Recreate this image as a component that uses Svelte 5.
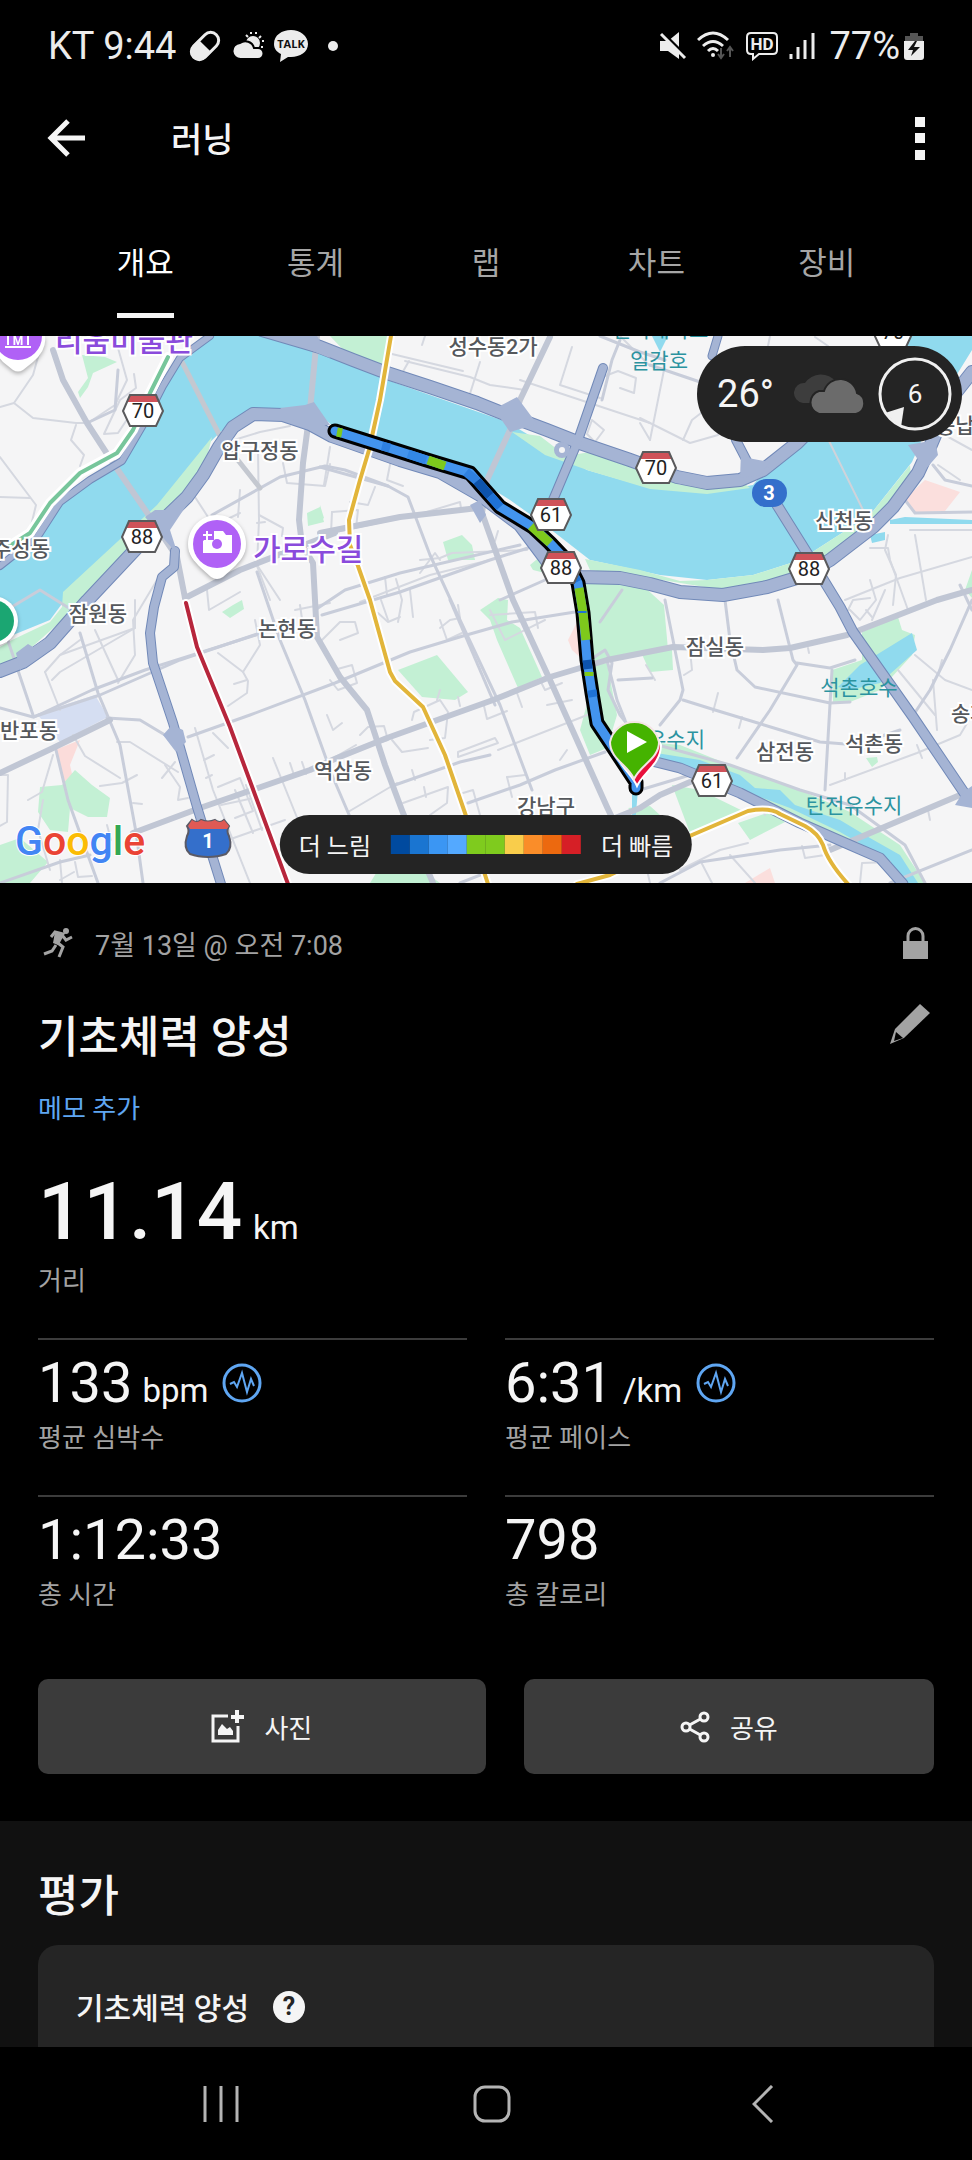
<script>
  let activeTab = "개요";
  const tabs = ["개요", "통계", "랩", "차트", "장비"];

  const stats = [
    { value: "133", unit: "bpm", label: "평균 심박수", chart: true },
    { value: "6:31", unit: "/km", label: "평균 페이스", chart: true },
    { value: "1:12:33", label: "총 시간" },
    { value: "798", label: "총 칼로리" },
  ];

  const paceColors = [
    "#004a9f", "#1a75d1", "#3b96f3", "#54a9ff", "#7fcb1e",
    "#7fcb1e", "#f9cd4b", "#fa8d29", "#ec690f", "#d61f26",
  ];

  // small streets
  const minor = [
    "M0 407 14 403 33 375 40 350", "M14 403 33 418 76 423 86 423", "M118 348 127 380 115 405 88 423", "M134 374 136 388 120 400 104 434 118 433 132 412",
    "M76 425 71 440 84 455 80 466", "M0 457 36 505 30 530", "M0 497 30 498", "M234 440 260 432 290 426", "M258 450 259 520 257 565 280 600",
    "M283 463 287 483 325 486 330 464", "M259 515 283 528 282 536", "M257 523 265 522", "M238 517 240 490", "M195 497 208 517 202 524",
    "M215 525 240 513", "M330 447 324 485", "M394 444 387 480 403 486", "M375 487 368 505 350 502", "M332 512 358 510 356 528", "M332 512 331 533 420 514 460 502 461 508",
    "M257 566 270 600", "M207 590 209 610 240 592", "M160 575 133 620 135 655 118 683", "M45 672 60 655 135 628 135 600", "M45 672 60 710", "M80 640 60 655", "M95 630 118 680",
    "M52 680 60 672 135 628", "M218 653 243 672 260 645 255 620", "M243 672 248 681 247 693 228 706", "M234 684 247 680", "M0 775 8 775 7 822 0 826", "M53 755 42 792 28 800",
    "M43 800 38 830 50 870", "M73 735 85 756 120 778", "M100 786 122 783 137 775", "M117 742 130 742 178 772", "M165 765 180 787 178 800 188 798", "M162 778 175 762",
    "M195 728 213 790 250 883", "M213 733 228 748", "M204 760 214 755", "M206 778 212 775", "M218 787 240 778 253 811 235 818", "M235 790 253 833", "M246 785 262 830",
    "M221 805 258 797", "M228 840 285 820", "M273 758 300 825", "M290 763 294 775", "M302 762 306 774", "M133 803 142 804", "M107 825 111 840", "M60 860 62 883", "M75 862 78 877 92 876",
    "M60 880 74 872", "M322 640 340 622 355 622 358 633 340 640", "M295 610 330 603", "M305 640 300 605", "M405 361 470 377 490 385 525 390", "M409 361 401 375", "M425 336 422 345", "M392 354 463 371", "M480 362 468 400",
    "M520 380 650 423", "M572 347 560 385 600 398", "M600 378 618 371 636 378 634 393 620 388", "M592 420 604 430 595 442 587 434 592 420", "M640 423 650 440", "M620 336 650 366",
    "M388 620 381 600", "M378 613 388 622 400 617", "M396 579 402 600 398 622", "M410 590 413 617", "M385 577 387 595", "M420 560 440 558 452 553 527 550", "M420 573 435 553 440 560", "M498 531 495 541",
    "M360 602 430 575 490 560", "M440 628 450 620 460 618 458 605", "M440 620 447 640 462 633", "M490 615 535 612 538 628", "M490 610 505 640 545 620", "M327 715 333 730 342 723", "M334 670 352 665 357 683 338 690 330 680",
    "M360 735 368 727 384 726 388 740 372 745", "M412 720 414 712 440 700 448 712 445 738 430 740", "M392 740 402 752 428 748", "M437 700 440 690", "M458 697 460 706", "M484 706 487 719 507 711",
    "M540 680 545 690 562 683", "M517 693 522 707", "M458 752 495 738 498 743 458 757 458 752", "M498 750 600 710", "M547 705 572 700", "M560 760 567 750", "M507 777 525 775", "M507 777 512 797", "M403 803 448 787 447 803 430 815",
    "M412 770 415 780", "M424 787 426 797", "M463 793 473 790 480 815", "M348 812 397 783", "M356 745 330 760", "M640 760 650 750",
    "M664 370 650 440", "M640 418 690 443 718 435", "M683 440 692 420 705 410", "M770 336 768 346", "M815 337 828 346", "M890 405 972 450", "M938 465 960 480",
    "M910 530 972 530", "M870 548 888 548 890 560 908 610", "M888 535 885 550 896 575 893 605", "M915 535 926 600", "M972 557 900 578 845 600", "M870 580 876 600 860 620 850 610", "M848 610 853 600 870 598",
    "M866 610 872 617", "M885 590 872 620", "M690 650 692 670 684 675", "M718 693 713 712", "M742 717 739 728", "M808 648 809 653", "M845 780 845 773", "M922 758 917 745", "M930 820 928 810",
    "M915 655 945 680 972 690", "M898 670 935 715", "M942 660 938 675", "M730 855 755 883", "M680 870 720 850 748 843", "M700 860 712 883", "M640 840 650 883", "M760 800 765 815", "M802 846 805 858 825 855",
    "M860 883 862 863 890 862", "M655 680 646 665", "M933 680 937 730", "M830 785 917 753 960 735 972 715",
  ];

  // mid-size streets
  const medium = [
    "M87 423 115 410 118 370", "M212 515 280 477 325 466 345 470 388 486 408 497 430 555 460 620 500 705 532 790", "M320 467 388 486", "M80 633 98 693 120 745 136 832 143 883",
    "M257 572 280 640 305 700 332 775 350 817", "M450 600 465 635 495 705", "M0 708 33 717 100 695 180 660 260 633", "M0 617 33 715", "M34 717 92 690 145 670 256 635", "M188 737 250 715 335 683 410 652 463 636 512 622 575 612",
    "M315 610 345 590 400 573 520 545", "M322 615 400 592 490 560 528 548", "M395 785 460 762 490 755", "M468 803 520 785 555 770 605 752", "M0 614 40 590 80 615", "M56 750 68 800 98 883", "M107 718 140 720 165 735",
    "M650 365 703 383", "M665 600 683 690 680 700 660 725", "M683 700 715 710 820 742 845 744", "M725 600 730 640 737 670 755 687 830 703 850 702", "M778 600 793 660 797 665 770 710 737 758",
    "M797 663 830 668 855 660", "M832 670 825 790", "M590 660 605 650 612 663 608 690 620 715 640 740", "M600 622 622 590", "M607 660 617 700 625 720", "M618 680 652 678", "M660 883 700 862 780 850 830 845", "M972 600 950 650 930 690 912 717", "M900 730 870 740 865 745",
    "M933 465 945 480 972 486", "M905 500 915 513 972 512", "M960 585 972 610", "M640 740 730 765 800 790 850 805 905 845 925 883", "M0 883 60 862 90 855", "M460 883 600 828", "M640 790 690 775", "M890 883 972 850",
    "M545 580 500 600", "M600 336 640 352 665 360", "M602 400 612 360 620 340",
  ];

  // wide grey streets
  const wide = [
    "M53 350 63 380 87 423 113 463 150 517 177 557 185 598", "M317 336 310 410 303 463 299 520 302 545 313 563 317 637 340 677 367 710 385 765 403 813 433 883",
    "M550 337 520 400 510 430 487 480 482 513 513 600 550 680 607 807 625 845", "M0 773 53 748 110 720", "M320 533 400 517 478 508", "M185 598 240 570 335 533", "M133 833 200 808 310 770 337 758 387 738 493 700 550 677 607 660 673 647 763 650 790 648 847 635 937 600 972 590",
    "M573 835 640 808 660 795 690 782", "M830 850 960 795",
  ];

  const highways = [
    { d: "M210 336 180 358 163 386 143 425 122 461 90 480 60 502 38 536 0 566", w: 6 },
    { d: "M262 330 320 347 353 360 387 373 430 387 477 403 507 415 547 430 580 443 630 460 677 477 707 483 740 480 763 470 797 443 850 390 900 336", w: 12 },
    { d: "M0 671 23 662 50 643 87 601 133 552 160 523 187 497 203 475 219 447 233 427 253 414 283 415 310 424 332 436 400 460 440 472 480 495 520 525 550 565 580 577 620 578 650 584 680 592 723 595 767 587 800 577 830 560 873 527 893 507 918 473 930 447 950 400 972 372", w: 12 },
    { d: "M603 368 577 443 553 500", w: 8 },
    { d: "M175 551 174 567 162 577 154 607 150 633 153 663 173 723 197 807 221 884", w: 8 },
    { d: "M777 505 807 553 840 607 853 632 913 717 967 797", w: 9 },
    { d: "M640 758 680 768 740 793 800 823 850 845 880 858 903 884", w: 9 },
    { d: "M736 440 748 463 765 470", w: 8 },
    { d: "M718 336 712 356", w: 7 },
  ];

  // recorded track, coloured by pace
  const track = "M335 431 373 443 430 461 470 473 484 489 500 507 533 527 550 543 567 561 578 583 583 613 587 660 592 693 597 723 613 747 636 782 636 788";
  const paceParts = [
    { d: "M337 432 342 433", c: "#7ec91c" },
    { d: "M382 446 390 448", c: "#2f80e0" },
    { d: "M408 454 426 460", c: "#3387e6" },
    { d: "M428 460 445 466", c: "#7ec91c" },
    { d: "M466 472 477 481", c: "#2f80e0" },
    { d: "M477 481 490 496", c: "#0d53ad" },
    { d: "M490 496 500 507", c: "#1f72d6" },
    { d: "M531 526 550 543", c: "#7ec91c" },
    { d: "M567 562 577 582", c: "#1f72d6" },
    { d: "M579 588 583 613 586 640", c: "#7ec91c" },
    { d: "M582 611 582 613", c: "#1f72d6" },
    { d: "M587 660 588 669", c: "#0d53ad" },
    { d: "M589 672 589 676", c: "#7ec91c" },
    { d: "M592 690 593 697", c: "#1f72d6" },
  ];

  const districts = [
    { t: "성수동2가", x: 493, y: 354 },
    { t: "압구정동", x: 260, y: 458 },
    { t: "주성동", x: 21, y: 556 },
    { t: "잠원동", x: 98, y: 621 },
    { t: "논현동", x: 287, y: 636 },
    { t: "반포동", x: 29, y: 738 },
    { t: "역삼동", x: 343, y: 778 },
    { t: "강남구", x: 546, y: 814 },
    { t: "잠실동", x: 715, y: 654 },
    { t: "삼전동", x: 785, y: 759 },
    { t: "석촌동", x: 874, y: 751 },
    { t: "신천동", x: 844, y: 528 },
    { t: "송파동", x: 980, y: 721 },
    { t: "풍납동", x: 965, y: 433 },
  ];

  const waters = [
    { t: "건국대학교", x: 660, y: 337 },
    { t: "일감호", x: 659, y: 368 },
    { t: "석촌호수", x: 859, y: 695 },
    { t: "유수지", x: 676, y: 747 },
    { t: "탄전유수지", x: 854, y: 813 },
  ];

  const shields = [
    { t: "70", x: 143, y: 411 },
    { t: "88", x: 142, y: 537 },
    { t: "61", x: 551, y: 515 },
    { t: "88", x: 561, y: 568 },
    { t: "70", x: 656, y: 468 },
    { t: "88", x: 809, y: 569 },
    { t: "61", x: 712, y: 781 },
    { t: "70", x: 893, y: 332 },
  ];
</script>

<div class="screen">
  <div class="status-bar">
    <div class="status-left">
      <span>KT 9:44</span>
      <svg width="34" height="34" viewBox="0 0 34 34" aria-hidden="true">
        <g transform="rotate(45 17 17)">
          <rect x="9" y="1" width="16" height="32" rx="8" fill="none" stroke="#ececec" stroke-width="3" />
          <path d="M8 17h18v8a9 9 0 0 1-18 0z" fill="#ececec" />
        </g>
      </svg>
      <svg width="32" height="28" viewBox="0 0 32 28" aria-hidden="true">
        <circle cx="21" cy="11" r="7" fill="#ececec" />
        <path d="M14 3l2 2M19 0v2M24 0v2M29 4l-2 2M32 9h-2M31 15h-2" stroke="#ececec" stroke-width="2" />
        <path d="M9 27a8 8 0 0 1-1-16 9 9 0 0 1 14 5h4a5 5 0 0 1 0 11z" fill="#ececec" stroke="#000" stroke-width="2" />
      </svg>
      <svg width="34" height="34" viewBox="0 0 34 34" aria-hidden="true">
        <path d="M17 1C8 1 0 6 0 15c0 5 3 8 7 10l-1 8 8-5h3c9 0 17-5 17-13S26 1 17 1z" fill="#ececec" />
        <text x="17" y="19" class="talk">TALK</text>
      </svg>
      <span class="dot"></span>
    </div>
    <div class="status-right">
      <svg width="28" height="30" viewBox="0 0 28 30" aria-hidden="true">
        <path d="M1 10h8L20 1v27L9 20H1z" fill="#ececec" />
        <path d="M0 -2l30 30" stroke="#000" stroke-width="3" />
        <path d="M2 3l24 24" stroke="#ececec" stroke-width="3" />
      </svg>
      <svg width="38" height="30" viewBox="0 0 38 30" aria-hidden="true">
        <path d="M1 9q15-14 30 0M6 15q10-9 20 0M11 20q5-5 10 0" fill="none" stroke="#ececec" stroke-width="3" />
        <circle cx="16" cy="24" r="2" fill="#ececec" />
        <path d="M24 17v9M21 23l3 4 3-4M33 26v-9M30 20l3-4 3 4" fill="none" stroke="#555" stroke-width="2" />
      </svg>
      <svg width="34" height="30" viewBox="0 0 34 30" aria-hidden="true">
        <path d="M6 2h22q4 0 4 4v13q0 4-4 4H14l-6 5v-5H6q-4 0-4-4V6q0-4 4-4z" fill="none" stroke="#ececec" stroke-width="2" />
        <text x="17" y="19" class="hd">HD</text>
      </svg>
      <svg width="26" height="28" viewBox="0 0 26 28" aria-hidden="true">
        <path d="M2 27v-5M9 27V15M16 27V8M24 27V1" stroke="#ececec" stroke-width="3" />
      </svg>
      <span class="battery">77%
        <svg width="20" height="28" viewBox="0 0 20 28" aria-hidden="true">
          <path d="M6 1h8v3h5v6H1V4h5z" fill="#555" />
          <path d="M0 9h20v16q0 3-3 3H3q-3 0-3-3z" fill="#ececec" />
          <path d="M11 9l-7 9h5l-2 6 9-9h-6l3-6z" fill="#111" />
        </svg>
      </span>
    </div>
  </div>

  <header class="app-bar">
    <button class="icon-btn" aria-label="뒤로">
      <svg width="40" height="40" viewBox="0 0 40 40"><path d="M38 20H4M21 3L4 20l17 17" fill="none" stroke="#f5f5f5" stroke-width="5" /></svg>
    </button>
    <h1>러닝</h1>
    <button class="icon-btn" aria-label="더보기">
      <svg width="10" height="43" viewBox="0 0 10 43"><path d="M0 0h10v10H0zM0 16h10v10H0zM0 33h10v10H0z" fill="#f5f5f5" /></svg>
    </button>
  </header>

  <nav class="tabs">
    {#each tabs as tab}
      <button class:active={tab === activeTab} on:click={() => (activeTab = tab)}>{tab}</button>
    {/each}
  </nav>

  <div class="map">
    <svg class="map-canvas" viewBox="0 336 972 547" preserveAspectRatio="xMidYMid slice" role="img" aria-label="러닝 경로 지도">
      <rect x="0" y="336" width="972" height="547" fill="#f5f5f6" />

      <!-- special areas -->
      <path d="M37 714 95 695 108 717 60 742z" fill="#d5def2" />
      <path d="M55 750 80 740 70 765 76 792 66 795z" fill="#fbdcda" />
      <path d="M904 500 925 480 960 492 945 511 915 513z" fill="#fbdfdd" />
      <path d="M745 883 770 868 775 883zM568 640 578 620 583 660 572 650z" fill="#fbdfdd" />

      <!-- river -->
      <path d="M205 336 180 358 143 425 125 455 60 502 35 540 0 565V643L13 635 50 620 67 597 133 532 160 507 207 445 233 420 253 410 310 407 340 432 447 467 478 480 510 500 545 525 590 560 660 575 707 580 753 575 800 560 870 515 912 462 935 410 972 350V336H912L860 390 797 445 763 473 753 485 707 493 650 488 587 470 507 422 387 380 330 355 277 336z" fill="#90daee" />

      <!-- parks -->
      <g fill="#c3f0d4">
        <path d="M82 355 105 357 117 362 93 373 88 387 80 398 78 392 88 378z" />
        <path d="M212 437 157 505 63 592 62 607 50 622 12 640 0 647V665L23 655 60 622 90 590 150 528 187 490 205 465z" />
        <path d="M307 513 320 507 324 522 308 526z" />
        <path d="M233 605 242 600 244 609 230 618 222 612zM320 505 324 518 319 522z" />
        <path d="M330 336H392L385 375 355 362z" />
        <path d="M512 432 540 436 566 456 590 452 640 465 680 485 745 484 750 488 707 494 650 489 590 471 545 455z" />
        <path d="M585 559 640 570 680 581 707 580 753 575 800 560 870 515 910 465 912 485 870 525 800 575 723 590 650 578 590 570z" />
        <path d="M585 580 640 583 664 605 668 650 590 662z" />
        <path d="M443 542 462 535 472 545 475 560 448 560zM530 565 548 550 545 573 533 570z" />
        <path d="M480 610 498 598 508 600 507 620 520 628 542 677 518 688 497 640 490 620z" />
        <path d="M398 670 437 655 468 692 455 700 422 697z" />
        <path d="M590 665 607 663 617 715 607 748 590 755 580 730 588 700z" />
        <path d="M640 650 672 650 673 670 650 672z" />
        <path d="M627 740 680 745 730 765 800 790 850 812 900 845 925 883 905 883 870 850 790 815 740 790 690 770 645 765z" />
        <path d="M672 785 700 790 745 812 690 833zM738 823 770 812 785 822 750 840z" />
        <path d="M862 632 898 617 902 630 915 635 912 655 880 690 850 702 833 702 832 670 862 660zM866 758 877 757 878 762 872 767z" />
        <path d="M972 570 965 590 972 598zM628 808 650 806 660 815 640 818z" />
        <path d="M40 787 62 785 75 770 92 785 110 798 107 817 88 817 70 808 68 832 50 830 38 812z" />
        <path d="M0 845 20 838 48 862 30 883H0zM370 883 378 870 425 872 440 883z" />
      </g>
      <g fill="#90daee">
        <path d="M860 665 912 633 917 650 880 683 850 690 838 687z" />
        <path d="M650 752 700 760 740 775 755 788 780 790 795 805 840 820 870 838 900 855 918 883 908 883 885 858 840 832 790 808 760 797 735 785 680 768 650 762z" />
        <path d="M652 336H668L660 352z" />
        <path d="M870 535 885 532 885 540 872 543zM890 520 905 517 972 520V524H890z" />
        <path d="M632 790h6l-3 35h-3z" />
      </g>

      <g class="roads">
        {#each minor as d}<path {d} stroke="#d5d8e0" stroke-width="2" />{/each}
        {#each medium as d}<path {d} stroke="#c8cdda" stroke-width="3" />{/each}
        {#each wide as d}<path {d} stroke="#c0c6d4" stroke-width="6" />{/each}
        <path d="M180 358 222 440 260 488" stroke="#c4c8d0" stroke-width="5" />
        <path d="M829 441 866 516" stroke="#cfd3da" stroke-width="2" />
        {#each highways as h}<path d={h.d} stroke="#7189b8" stroke-width={h.w + 2} />{/each}
        {#each highways as h}<path d={h.d} stroke="#a5b4d4" stroke-width={h.w} />{/each}
      </g>
      <!-- interchanges -->
      <g fill="#a5b4d4">
        <path d="M494 409 517 397 537 424 510 432zM145 517 155 510 180 510 190 500 170 530 178 555z" />
        <path d="M275 336 317 336 330 358zM280 408 305 405 314 402 330 425 300 425z" />
        <path d="M741 452 748 458 770 462 760 475 740 478zM908 445 925 470 938 455 935 440z" />
        <path d="M163 735 172 725 183 730 186 742 176 752zM955 805 963 792 972 786V808zM470 505 480 500 486 515 480 523z" />
        <circle cx="562" cy="450" r="8" />
        <path d="M16 653 28 644 33 647 50 636 60 640 20 670z" />
      </g>
      <circle cx="562" cy="450" r="3" fill="#f5f5f6" />

      <!-- subway lines -->
      <g class="roads">
        <path d="M168 357 150 393 133 430 117 453 80 473 50 503 30 533 0 552" stroke="#fff" stroke-width="10" />
        <path d="M168 357 150 393 133 430 117 453 80 473 50 503 30 533 0 552" stroke="#77c69b" stroke-width="4" />
        <path d="M391 336 380 400 369 450 360 480 349 520 350 545 358 566 370 600 390 672 395 681 423 707 445 755 465 813 488 884" stroke="#fff" stroke-width="8" />
        <path d="M391 336 380 400 369 450 360 480 349 520 350 545 358 566 370 600 390 672 395 681 423 707 445 755 465 813 488 884" stroke="#e2b53a" stroke-width="4" />
        <path d="M577 884 610 875 692 835 748 811Q770 807 780 814L805 826Q818 833 823 845 828 862 848 884" stroke="#fff" stroke-width="8" />
        <path d="M577 884 610 875 692 835 748 811Q770 807 780 814L805 826Q818 833 823 845 828 862 848 884" stroke="#e2b53a" stroke-width="4" />
        <path d="M186 603 197 647 230 727 288 884" stroke="#fff" stroke-width="8" />
        <path d="M186 603 197 647 230 727 288 884" stroke="#b7263c" stroke-width="4" />
      </g>

      <g class="district">
        {#each districts as p}<text x={p.x} y={p.y}>{p.t}</text>{/each}
      </g>
      <g class="water">
        {#each waters as p}<text x={p.x} y={p.y}>{p.t}</text>{/each}
      </g>
      <g class="poi">
        <text x="55" y="351">리움미술관</text>
        <text x="253" y="560">가로수길</text>
      </g>

      <!-- track -->
      <g class="roads">
        <path d={track} stroke="#000" stroke-width="15" />
        <path d={track} stroke="#4394ee" stroke-width="9" />
        {#each paceParts as p}<path class="pace" d={p.d} stroke={p.c} />{/each}
      </g>

      <!-- road shields -->
      {#each shields as s}
        <g transform="translate({s.x} {s.y})">
          <path d="M-13-16H13L20 0 13 15H-13L-20 0z" fill="#fff" />
          <path d="M-13-16H13L16-9H-16z" fill="#cf5259" />
          <path d="M-13-16H13L20 0 13 15H-13L-20 0z" fill="none" stroke="#5a5a5c" stroke-width="2" />
          <text class="shield" y="7">{s.t}</text>
        </g>
      {/each}
      <rect x="752" y="479" width="35" height="28" rx="14" fill="#346fcb" />
      <text class="shield light" x="769" y="500">3</text>
      <path d="M192 820q5 4 9 0 7 3 14 0 5 4 9 0l5 6q-3 5 0 10 4 12-3 18-8 3-18 3t-18-3q-7-6-3-18 3-5 0-10z" fill="#346fcb" stroke="#5a5a66" stroke-width="2" />
      <path d="M192 820q5 4 9 0 7 3 14 0 5 4 9 0l5 6-2 3H190l-2-3z" fill="#e05a55" />
      <text class="shield light" x="208" y="848">1</text>

      <!-- place pins -->
      <g class="pin">
        <path d="M-9 336h54q2 14-12 26l-10 8q-5 3-10 0l-10-8q-10-10-12-26z" fill="#fff" />
        <path d="M-6 336h48a24 24 0 0 1-48 0z" fill="#b061f6" />
        <path d="M5 347h26M8 336v9M28 336v9" stroke="#fff" stroke-width="2" />
        <text class="museum" x="18" y="345">M</text>
        <path d="M217 515c16 0 29 13 29 29 0 11-6 17-13 24l-10 9q-6 4-12 0l-10-9c-7-7-13-13-13-24 0-16 13-29 29-29z" fill="#fff" />
        <circle cx="217" cy="544" r="24" fill="#b061f6" />
        <path d="M203 541v12h29v-18h-6l-3-4h-10l-3 4" fill="#fff" />
        <circle cx="217" cy="544" r="5" fill="#b061f6" />
        <path d="M199 530h15v10h-15z" fill="#b061f6" />
        <path d="M203 535h9M207 531v9" stroke="#fff" stroke-width="2" />
        <circle cx="-7" cy="621" r="25" fill="#fff" />
      </g>
      <circle cx="-7" cy="621" r="21" fill="#1ba672" />

      <!-- start and finish pins -->
      <path d="M637 786c-6-14-22-22-22-41a25 25 0 0 1 46 0c0 19-18 28-24 41z" fill="#e8103c" stroke="#fff" stroke-width="2" />
      <path d="M634 779c-6-14-24-20-24-37a25 25 0 0 1 49 0c0 17-19 23-25 37z" fill="#45b300" stroke="#f4e4e4" stroke-width="2" />
      <path d="M627 731v22l20-11z" fill="#fff" />

      <text class="google" x="15" y="855"
        ><tspan fill="#4285f4">G</tspan><tspan fill="#ea4335">o</tspan><tspan fill="#fbbc05">o</tspan><tspan fill="#4285f4">g</tspan><tspan fill="#34a853">l</tspan><tspan fill="#ea4335">e</tspan></text
      >
    </svg>

    <div class="weather">
      <span class="temp">26°</span>
      <svg width="74" height="42" viewBox="0 0 74 42" aria-hidden="true">
        <path d="M10 30a10 10 0 0 1 2-20A19 19 0 0 1 43 9L30 30z" fill="#3d3d3d" />
        <path d="M26 41a12 12 0 0 1 0-23h5a17 17 0 0 1 33 2 11 11 0 0 1-1 21z" fill="#6b6b6b" stroke="#242424" stroke-width="2" />
      </svg>
      <span class="wind">
        <svg width="74" height="74" viewBox="0 0 74 74" aria-hidden="true">
          <circle cx="37" cy="37" r="35" fill="none" stroke="#f0f0f0" stroke-width="3" />
          <path d="M7 56l19-6-3 20z" fill="#f0f0f0" />
        </svg>
        <span>6</span>
      </span>
    </div>

    <div class="legend">
      <span>더 느림</span>
      <div class="scale">
        {#each paceColors as color}<i style="background: {color}"></i>{/each}
      </div>
      <span>더 빠름</span>
    </div>
  </div>

  <main class="details">
    <div class="date-row">
      <svg width="30" height="32" viewBox="0 0 30 32" aria-hidden="true">
        <circle cx="23" cy="4" r="3" fill="#a3a3a3" />
        <path d="M8 10l4-5 8 2-5 9 5 4-4 10M13 18l-4 6-8 3M19 8l4 5 6-3" fill="none" stroke="#a3a3a3" stroke-width="3" />
        <path d="M12 5l8 2-5 11-5-2z" fill="#a3a3a3" />
      </svg>
      <span>7월 13일 @ 오전 7:08</span>
      <svg class="lock" width="25" height="32" viewBox="0 0 25 32" role="img" aria-label="비공개">
        <path d="M0 14h25v18H0z" fill="#a3a3a3" />
        <path d="M5 15V9a7 7 0 0 1 15 0v6" fill="none" stroke="#a3a3a3" stroke-width="3" />
      </svg>
    </div>

    <div class="title-row">
      <h2>기초체력 양성</h2>
      <button class="icon-btn" aria-label="이름 편집">
        <svg width="40" height="40" viewBox="0 0 40 40">
          <path d="M30 0l10 9-26 25L0 40l5-15z" fill="#a3a3a3" />
          <path d="M6 28l7 6-9 3z" fill="#000" />
        </svg>
      </button>
    </div>
    <a class="memo" href="#memo">메모 추가</a>

    <div class="distance"><span>11.14</span><small>km</small></div>
    <div class="label distance-label">거리</div>

    <div class="stats">
      {#each stats as stat}
        <div class="stat">
          <div class="value">
            <span>{stat.value}</span>
            {#if stat.unit}<small>{stat.unit}</small>{/if}
            {#if stat.chart}
              <button class="icon-btn" aria-label="{stat.label} 차트">
                <svg width="40" height="40" viewBox="0 0 40 40">
                  <circle cx="20" cy="20" r="18" fill="none" stroke="#5fa6f2" stroke-width="3" />
                  <path d="M8 21l4-2 3 5 5-14 5 19 4-13 3 7" fill="none" stroke="#5fa6f2" stroke-width="2" />
                </svg>
              </button>
            {/if}
          </div>
          <div class="label">{stat.label}</div>
        </div>
      {/each}
    </div>

    <div class="actions">
      <button class="photo">
        <svg width="33" height="33" viewBox="0 0 33 33" aria-hidden="true">
          <path d="M17 6H2v25h25V16" fill="none" stroke="#f5f5f5" stroke-width="3" />
          <path d="M26 0v13M20 7h13" fill="none" stroke="#f5f5f5" stroke-width="4" />
          <path d="M7 25v-5l4-6 5 5 3-2 3 4v4z" fill="#f5f5f5" />
        </svg>
        사진
      </button>
      <button class="share">
        <svg width="30" height="32" viewBox="0 0 30 32" aria-hidden="true">
          <path d="M24 6L6 16l18 10" fill="none" stroke="#f5f5f5" stroke-width="3" />
          <g fill="#3b3b3b" stroke="#f5f5f5" stroke-width="3">
            <circle cx="24" cy="6" r="4" />
            <circle cx="6" cy="16" r="4" />
            <circle cx="24" cy="26" r="4" />
          </g>
        </svg>
        공유
      </button>
    </div>
  </main>

  <section class="rating">
    <h2>평가</h2>
    <div class="card">
      <h3>기초체력 양성</h3>
      <button class="help" aria-label="도움말">?</button>
    </div>
  </section>

  <footer class="system-nav">
    <button class="icon-btn" aria-label="최근 앱">
      <svg width="36" height="38" viewBox="0 0 36 38"><path d="M2 1v36M18 1v36M34 1v36" stroke="#b4b4b4" stroke-width="3" /></svg>
    </button>
    <button class="icon-btn" aria-label="홈">
      <svg width="38" height="38" viewBox="0 0 38 38"><rect x="2" y="2" width="34" height="34" rx="10" fill="none" stroke="#b4b4b4" stroke-width="3" /></svg>
    </button>
    <button class="icon-btn" aria-label="이전">
      <svg width="22" height="38" viewBox="0 0 22 38"><path d="M20 1L2 19l18 18" fill="none" stroke="#b4b4b4" stroke-width="3" /></svg>
    </button>
  </footer>
</div>

<style>
  :global(body) {
    margin: 0;
    background: #000;
  }

  * {
    box-sizing: border-box;
  }

  .screen {
    min-height: 100vh;
    display: flex;
    flex-direction: column;
    background: #000;
    color: #f5f5f5;
    font-family: Roboto, "Noto Sans CJK KR", sans-serif;
  }

  h1,
  h2,
  h3 {
    margin: 0;
    font-weight: 500;
  }

  svg {
    display: block;
    flex: none;
  }

  button {
    font-family: inherit;
    color: inherit;
    border: none;
    padding: 0;
    background: none;
    cursor: pointer;
  }

  .icon-btn {
    display: block;
  }

  /* status bar */
  .status-bar {
    display: flex;
    justify-content: space-between;
    align-items: center;
    height: 92px;
    padding: 0 48px;
    font-size: 38px;
    line-height: 40px;
    color: #ececec;
  }
  .status-left,
  .status-right {
    display: flex;
    align-items: center;
    gap: 10px;
  }
  .status-left > span:first-child {
    margin-right: 2px;
  }
  .talk {
    font: 700 11px "Open Sans", sans-serif;
    text-anchor: middle;
    fill: #111;
  }
  .hd {
    font: 700 17px Roboto, sans-serif;
    text-anchor: middle;
    fill: #ececec;
  }
  .dot {
    width: 10px;
    height: 10px;
    margin-left: 10px;
    border-radius: 50%;
    background: #ececec;
  }
  .battery {
    display: flex;
    align-items: center;
    gap: 4px;
    margin-left: 4px;
  }

  /* app bar */
  .app-bar {
    display: flex;
    align-items: center;
    height: 92px;
    padding: 0 47px;
  }
  .app-bar h1 {
    flex: 1;
    margin: 4px 0 0 84px;
    font-size: 34px;
    line-height: 40px;
  }

  .tabs {
    display: grid;
    grid-template-columns: repeat(5, 1fr);
    justify-items: center;
    padding: 0 60px 18px;
  }
  .tabs button {
    padding: 60px 0 29px;
    border-bottom: 5px solid transparent;
    font-size: 31px;
    line-height: 40px;
    color: #a6a6a6;
  }
  .tabs button.active {
    color: #fff;
    border-color: #f5f5f5;
  }

  /* map */
  .map {
    position: relative;
  }
  .map-canvas {
    width: 100%;
    aspect-ratio: 972 / 547;
  }
  .map-canvas text {
    font-family: Roboto, "Noto Sans CJK KR", sans-serif;
  }
  .roads path {
    fill: none;
    stroke-linejoin: round;
    stroke-linecap: round;
  }
  .roads .pace {
    stroke-width: 9px;
    stroke-linecap: butt;
  }
  .district text {
    font-size: 21px;
    font-weight: 500;
    text-anchor: middle;
    fill: #55585c;
    stroke: #fff;
    stroke-width: 4px;
    paint-order: stroke;
  }
  .water text {
    font-size: 21px;
    text-anchor: middle;
    fill: #2b93a0;
  }
  .poi text {
    font-size: 30px;
    font-weight: 500;
    fill: #8a4bdc;
    stroke: #fff;
    stroke-width: 4px;
    paint-order: stroke;
  }
  .shield {
    font-size: 20px;
    text-anchor: middle;
    fill: #222;
  }
  .shield.light {
    font-weight: 700;
    fill: #fff;
  }
  .pin {
    filter: drop-shadow(0 2px 2px rgba(0, 0, 0, 0.3));
  }
  .museum {
    font-size: 12px;
    font-weight: 700;
    text-anchor: middle;
    fill: #fff;
  }
  .google {
    font-size: 41px;
    font-weight: 500;
    stroke: #fff;
    stroke-width: 2px;
    paint-order: stroke;
  }

  .weather {
    position: absolute;
    top: 10px;
    right: 10px;
    display: flex;
    align-items: center;
    gap: 11px;
    height: 96px;
    padding: 0 10px 0 20px;
    border-radius: 48px;
    background: #242424;
  }
  .temp {
    font-size: 38px;
    margin-right: 8px;
  }
  .wind {
    display: grid;
    place-items: center;
    font-size: 26px;
  }
  .wind > * {
    grid-area: 1 / 1;
  }

  .legend {
    position: absolute;
    bottom: 9px;
    left: 50%;
    transform: translateX(-50%);
    display: flex;
    align-items: center;
    gap: 20px;
    height: 59px;
    padding: 0 19px;
    border-radius: 30px;
    background: #242424;
    font-size: 24px;
    white-space: nowrap;
  }
  .scale {
    display: flex;
  }
  .scale i {
    width: 19px;
    height: 19px;
  }

  /* activity details */
  .details {
    padding: 40px 38px 47px;
  }
  .date-row {
    display: flex;
    align-items: center;
    height: 40px;
    padding: 0 6px 0 5px;
    font-size: 27px;
    color: #a3a3a3;
  }
  .date-row span {
    flex: 1;
    margin-left: 22px;
  }
  .title-row {
    display: flex;
    justify-content: space-between;
    align-items: flex-start;
    margin-top: 41px;
    padding-right: 4px;
  }
  .title-row h2,
  .rating h2 {
    font-size: 44px;
    line-height: 68px;
  }
  .memo {
    display: table;
    margin-top: 17px;
    font-size: 26px;
    line-height: 40px;
    color: #5fa6f2;
    text-decoration: none;
  }
  .distance {
    display: flex;
    align-items: baseline;
    height: 80px;
    margin-top: 43px;
    font-size: 80px;
    line-height: 80px;
    font-weight: 500;
  }
  small {
    font-size: 33px;
    font-weight: 400;
  }
  .distance small {
    margin-left: 11px;
  }
  .label {
    font-size: 26px;
    line-height: 36px;
    color: #a3a3a3;
  }
  .distance-label {
    margin-top: 11px;
  }

  .stats {
    display: grid;
    grid-template-columns: 1fr 1fr;
    gap: 39px 38px;
    margin-top: 39px;
  }
  .stat {
    border-top: 2px solid #3c3c3c;
    padding-top: 11px;
  }
  .value {
    display: flex;
    align-items: baseline;
    height: 64px;
    margin-bottom: 5px;
    font-size: 56px;
    line-height: 64px;
  }
  .value small {
    margin-left: 10px;
  }
  .value .icon-btn {
    align-self: center;
    margin-left: 14px;
  }

  .actions {
    display: flex;
    gap: 38px;
    margin-top: 66px;
  }
  .actions button {
    display: flex;
    align-items: center;
    justify-content: center;
    gap: 20px;
    height: 95px;
    border-radius: 10px;
    background: #3b3b3b;
    font-size: 26px;
  }
  .photo {
    flex: 12;
  }
  .share {
    flex: 11;
  }

  /* rating */
  .rating {
    flex: 1;
    display: flex;
    flex-direction: column;
    padding: 42px 38px 0;
    background: #111;
  }
  .card {
    flex: 1;
    display: flex;
    align-items: flex-start;
    gap: 24px;
    margin-top: 14px;
    padding: 44px 38px 0;
    border-radius: 20px 20px 0 0;
    background: #252525;
  }
  .card h3 {
    font-size: 30px;
    line-height: 40px;
  }
  .help {
    width: 32px;
    height: 32px;
    margin-top: 2px;
    border-radius: 50%;
    background: #f5f5f5;
    color: #252525;
    font-size: 25px;
    font-weight: 700;
    line-height: 32px;
  }

  .system-nav {
    display: grid;
    grid-template-columns: repeat(3, 1fr);
    place-items: center;
    height: 113px;
    padding: 0 74px 0 86px;
    background: #000;
  }
</style>
